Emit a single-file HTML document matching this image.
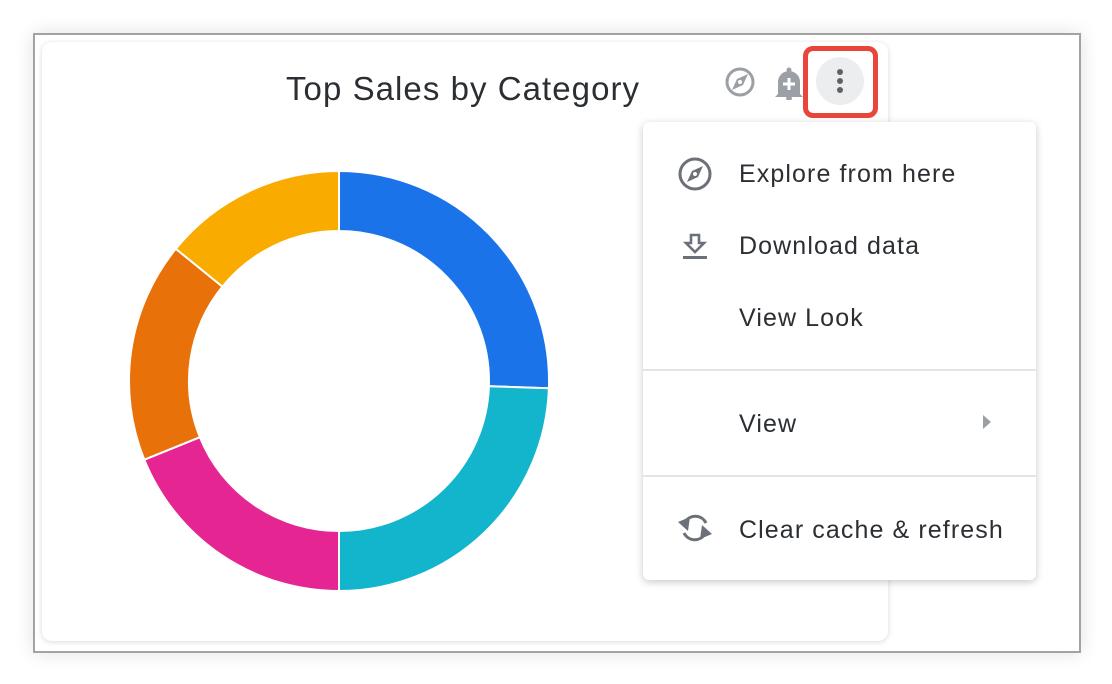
<!DOCTYPE html>
<html><head><style>
body{margin:0;width:1112px;height:684px;background:#fff;position:relative;overflow:hidden;font-family:"Liberation Sans",Arial,sans-serif}
.frame{position:absolute;left:33px;top:33px;width:1044px;height:616px;border:2px solid #a3a3a5;box-shadow:0 0 18px rgba(0,0,0,0.12);background:#fff}
.card{position:absolute;left:42px;top:42px;width:846px;height:599px;border-radius:10px;background:#fff;box-shadow:0 1px 6px rgba(0,0,0,0.15)}
.title{position:absolute;left:286px;top:70px;font-size:33px;color:#2b2f33;letter-spacing:1.05px}
.menu{position:absolute;left:643px;top:122px;width:393px;height:458px;background:#fff;border-radius:6px;box-shadow:0 2px 8px rgba(0,0,0,0.22)}
.item{position:absolute;left:96px;font-size:25px;color:#2b2f33;letter-spacing:1.1px}
.sep{position:absolute;left:0;width:393px;height:2px;background:#e1e4e8}
.hl{position:absolute;left:803px;top:46px;width:75px;height:72px;border:5px solid #e8463a;border-radius:10px;box-sizing:border-box}
</style></head><body>
<div class="frame"></div>
<div class="card"></div>
<div class="title">Top Sales by Category</div>
<svg width="1112" height="684" style="position:absolute;left:0;top:0">
<g stroke="#fff" stroke-width="2">
<path d="M339,171 A210,210 0 0 1 548.9,388.3 L488.9,386.2 A150,150 0 0 0 339,231 Z" fill="#1a73e8"/>
<path d="M548.9,388.3 A210,210 0 0 1 339,591 L339,531 A150,150 0 0 0 488.9,386.2 Z" fill="#12b5cb"/>
<path d="M339,591 A210,210 0 0 1 144.3,459.7 L199.9,437.2 A150,150 0 0 0 339,531 Z" fill="#e52592"/>
<path d="M144.3,459.7 A210,210 0 0 1 175.8,248.8 L222.4,286.6 A150,150 0 0 0 199.9,437.2 Z" fill="#e8710a"/>
<path d="M175.8,248.8 A210,210 0 0 1 339,171 L339,231 A150,150 0 0 0 222.4,286.6 Z" fill="#f9ab00"/>
</g>
<circle cx="740" cy="82" r="13" fill="none" stroke="#9aa0a6" stroke-width="3"/>
<path d="M748,74 L743,85 L732,90 L737,79 Z" fill="#9aa0a6"/>
<circle cx="740" cy="82" r="2" fill="#fff"/>
<path d="M778,94 L778,82 A11,11 0 0 1 800,82 L800,94 L803,97 L775,97 Z" fill="#9aa0a6"/>
<circle cx="789" cy="70" r="2.5" fill="#9aa0a6"/>
<rect x="786" y="97" width="6" height="3" rx="1.5" fill="#9aa0a6"/>
<path d="M789,78 V90 M783,84 H795" stroke="#fff" stroke-width="3"/>
<circle cx="840" cy="81" r="24" fill="#ecedee"/>
<circle cx="840" cy="72" r="3" fill="#5f6368"/>
<circle cx="840" cy="81" r="3" fill="#5f6368"/>
<circle cx="840" cy="90" r="3" fill="#5f6368"/>
</svg>
<div class="hl"></div>
<div class="menu">
<svg width="393" height="458" style="position:absolute;left:0;top:0">
<circle cx="52" cy="52" r="15" fill="none" stroke="#6b7079" stroke-width="3"/>
<path d="M60,44 L55,55 L44,60 L49,49 Z" fill="#6b7079"/>
<circle cx="52" cy="52" r="2" fill="#fff"/>
<path d="M48,113 H56 V121 H61 L52,130 L43,121 H48 Z" fill="none" stroke="#6b7079" stroke-width="2.6"/>
<rect x="40" y="134" width="24" height="3" fill="#6b7079"/>
<path d="M340,293 L348,300 L340,307 Z" fill="#9aa0a6"/>
<path d="M63,401 A12,12 0 0 0 42,400" fill="none" stroke="#6b7079" stroke-width="3"/>
<path d="M35,400 L47,395 L45,409 Z" fill="#6b7079"/>
<path d="M41,411 A12,12 0 0 0 62,412" fill="none" stroke="#6b7079" stroke-width="3"/>
<path d="M69,412 L57,417 L59,403 Z" fill="#6b7079"/>
</svg>
<div class="item" style="top:38px">Explore from here</div>
<div class="item" style="top:110px">Download data</div>
<div class="item" style="top:182px">View Look</div>
<div class="sep" style="top:247px"></div>
<div class="item" style="top:288px">View</div>
<div class="sep" style="top:353px"></div>
<div class="item" style="top:394px">Clear cache &amp; refresh</div>
</div>
</body></html>
